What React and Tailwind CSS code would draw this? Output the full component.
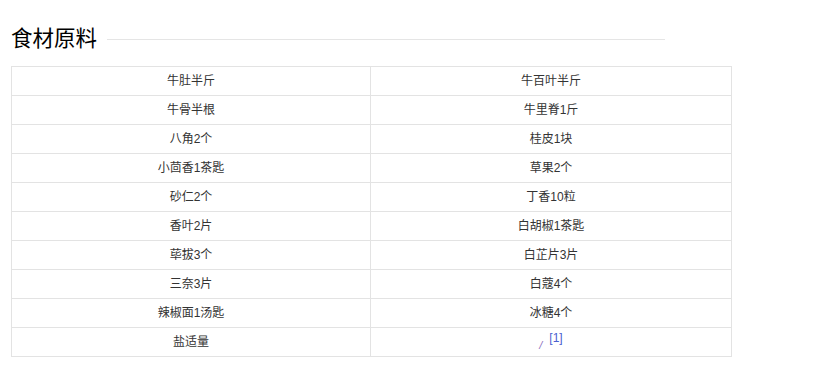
import React from 'react';

const rows = [
  ['牛肚半斤', '牛百叶半斤'],
  ['牛骨半根', '牛里脊1斤'],
  ['八角2个', '桂皮1块'],
  ['小茴香1茶匙', '草果2个'],
  ['砂仁2个', '丁香10粒'],
  ['香叶2片', '白胡椒1茶匙'],
  ['荜拔3个', '白芷片3片'],
  ['三奈3片', '白蔻4个'],
  ['辣椒面1汤匙', '冰糖4个'],
  ['盐适量', null],
];

const App = () => {
  return (
    <div
      className="w-[814px] h-[370px] bg-white text-[#333]"
      style={{ fontFamily: '"Liberation Sans", "Noto Sans CJK SC", sans-serif' }}
    >
      {/* Heading */}
      <div className="flex items-center w-[654px] ml-[11px] pt-[26px] h-[66px] pb-[14px]">
        <h2 className="text-[21.5px] leading-[26px] text-black">食材原料</h2>
        <div className="flex-1 h-px bg-[#e5e5e5] ml-[10px] mt-[1px]" />
      </div>

      {/* Ingredient table */}
      <div className="ml-[11px] w-[721px] border border-[#e3e3e3]">
        {rows.map((row, i) => (
          <div
            key={i}
            className={
              i > 0
                ? 'grid grid-cols-[359px_1fr] h-[29px] border-t border-[#e3e3e3]'
                : 'grid grid-cols-[359px_1fr] h-[28px]'
            }
          >
            <div className="flex items-center justify-center text-[12px] border-r border-[#e3e3e3]">
              {row[0]}
            </div>
            <div className="flex items-center justify-center text-[12px]">
              {row[1] ?? (
                <span className="leading-none pt-[6px]">
                  <span className="text-[#8a6fc0] italic text-[11px]">/</span>
                  <span className="relative -top-[7px] text-[#4a5fd0] text-[12px] ml-[7px]">[1]</span>
                </span>
              )}
            </div>
          </div>
        ))}
      </div>
    </div>
  );
};

export default App;
